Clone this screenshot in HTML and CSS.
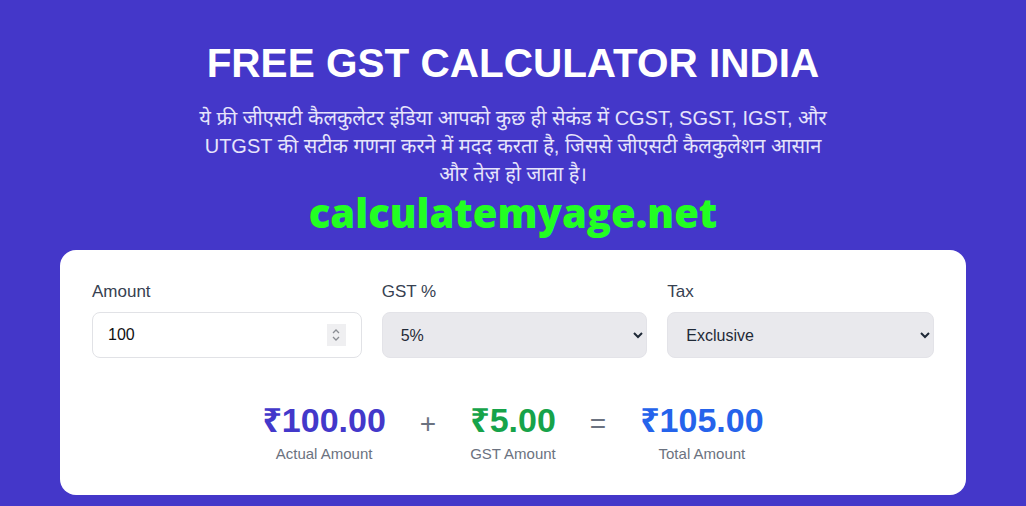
FILE: index.html
```html
<!DOCTYPE html>
<html lang="hi">
<head>
<meta charset="utf-8">
<title>Free GST Calculator India</title>
<link rel="stylesheet" href="styles.css">
</head>
<body>
<main class="page">
  <header class="hero">
    <h1 class="title">FREE GST CALCULATOR INDIA</h1>
    <p class="intro">ये फ्री जीएसटी कैलकुलेटर इंडिया आपको कुछ ही सेकंड में CGST, SGST, IGST, और UTGST की सटीक गणना करने में मदद करता है, जिससे जीएसटी कैलकुलेशन आसान और तेज़ हो जाता है।</p>
    <div class="brand">calculatemyage.net</div>
  </header>
  <section class="card">
    <div class="fields">
      <label class="field">
        <span class="label">Amount</span>
        <span class="input-wrap">
          <input class="control input" type="number" value="100">
          <span class="spin" aria-hidden="true">
            <svg width="10" height="16" viewBox="0 0 10 16"><path d="M2 6 L5 3 L8 6 M2 10 L5 13 L8 10" fill="none" stroke="#8a8d93" stroke-width="1.3"/></svg>
          </span>
        </span>
      </label>
      <label class="field">
        <span class="label">GST %</span>
        <select class="control select">
          <option>5%</option>
          <option>12%</option>
          <option>18%</option>
          <option>28%</option>
        </select>
      </label>
      <label class="field">
        <span class="label">Tax</span>
        <select class="control select">
          <option>Exclusive</option>
          <option>Inclusive</option>
        </select>
      </label>
    </div>
    <div class="results">
      <div class="result">
        <div class="value actual">₹100.00</div>
        <div class="caption">Actual Amount</div>
      </div>
      <div class="op">+</div>
      <div class="result">
        <div class="value gst">₹5.00</div>
        <div class="caption">GST Amount</div>
      </div>
      <div class="op">=</div>
      <div class="result">
        <div class="value total">₹105.00</div>
        <div class="caption">Total Amount</div>
      </div>
    </div>
  </section>
</main>
</body>
</html>
```

FILE: styles.css
```css
* { box-sizing: border-box; }
html, body { margin: 0; padding: 0; }
body {
  background: #4437c9;
  font-family: "Liberation Sans", Arial, "Noto Sans", sans-serif;
  height: 506px;
  overflow: hidden;
}
.page {
  width: 906px;
  margin: 0 auto;
  padding-top: 39px;
}
.hero {
  display: flex;
  flex-direction: column;
  align-items: center;
  text-align: center;
}
.title {
  margin: 0;
  color: #ffffff;
  font-size: 40.5px;
  font-weight: 700;
  line-height: 48px;
}
.intro {
  margin: 17px 0 0;
  width: 650px;
  color: #e6e4fb;
  font-size: 20px;
  line-height: 28px;
}
.brand {
  margin-top: 1px;
  color: #22ff22;
  font-family: "Open Sans", sans-serif;
  font-weight: 800;
  font-size: 40px;
  line-height: 48px;
}
.card {
  margin-top: 13px;
  background: #ffffff;
  border-radius: 16px;
  padding: 32px 32px 32px;
}
.fields {
  display: grid;
  grid-template-columns: 270fr 266fr 267fr;
  gap: 20px;
}
.field {
  display: flex;
  flex-direction: column;
  gap: 10px;
}
.label {
  color: #374151;
  font-size: 17px;
  line-height: 20px;
}
.input-wrap {
  position: relative;
  display: block;
}
.control {
  display: block;
  height: 46px;
  width: 100%;
  border-radius: 8px;
  font-family: "Liberation Sans", Arial, sans-serif;
  font-size: 16px;
  color: #1f2937;
  padding: 0 14px;
}
.input {
  background: #ffffff;
  border: 1px solid #e1e2e6;
  padding-left: 15px;
  color: #111111;
  -moz-appearance: textfield;
}
.input::-webkit-outer-spin-button,
.input::-webkit-inner-spin-button {
  -webkit-appearance: none;
  margin: 0;
}
.spin {
  position: absolute;
  right: 16px;
  top: 12px;
  width: 19px;
  height: 22px;
  background: #efeff1;
  display: flex;
  align-items: center;
  justify-content: center;
  pointer-events: none;
}
.select {
  background: #e9e9ed;
  border: 1px solid #e3e3e8;
}
.results {
  display: flex;
  justify-content: center;
  align-items: flex-start;
  gap: 34px;
  margin-top: 42px;
}
.result {
  display: flex;
  flex-direction: column;
  align-items: center;
}
.value {
  font-size: 34px;
  font-weight: 700;
  line-height: 40px;
}
.actual { color: #4338ca; }
.gst { color: #16a34a; }
.total { color: #2563eb; }
.caption {
  margin-top: 5px;
  color: #6b7280;
  font-size: 15px;
  line-height: 18px;
}
.op {
  color: #6b7280;
  font-size: 28px;
  line-height: 40px;
  padding-top: 4px;
}
```
